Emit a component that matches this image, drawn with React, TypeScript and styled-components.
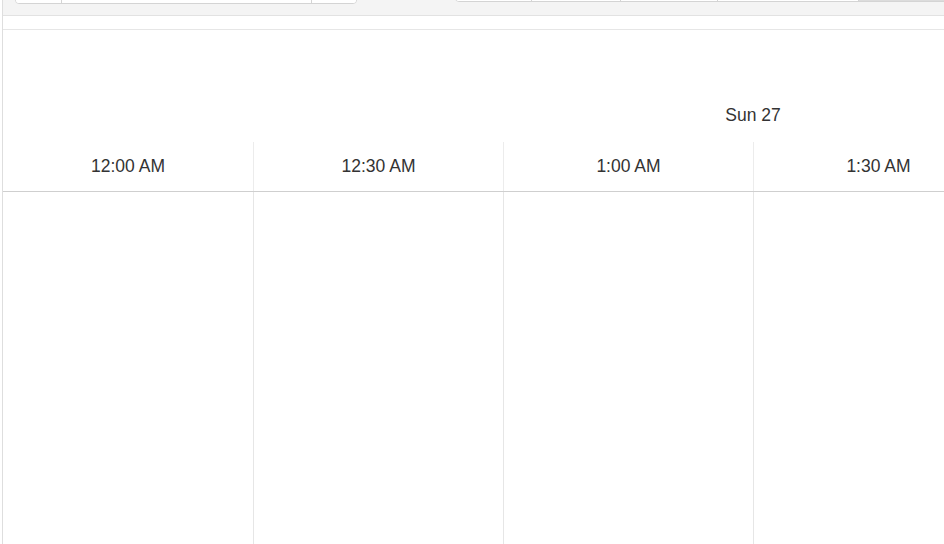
import * as React from 'react'
import styled, { createGlobalStyle } from 'styled-components'

const GlobalStyle = createGlobalStyle`
  html, body {
    margin: 0;
    padding: 0;
    background: #fff;
    overflow: hidden;
  }
  body {
    font-family: "Liberation Sans", Arial, sans-serif;
    color: #333;
  }
`

const Page = styled('div')`
  width: 944px;
  height: 544px;
  padding-left: 2px;
  box-sizing: border-box;
  overflow: hidden;
`

const Frame = styled('div')`
  height: 100%;
  border-left: 1px solid #dedede;
  display: flex;
  flex-direction: column;
  overflow: hidden;
`

const Toolbar = styled('div')`
  height: 15px;
  flex: none;
  background: #f4f4f4;
  border-bottom: 1px solid #e2e2e2;
  overflow: hidden;
  position: relative;
`

// button groups are scrolled mostly out of view; only their bottoms show
const Group = styled('div')<{ $left: number; $bottom: number }>`
  position: absolute;
  left: ${(p) => p.$left}px;
  bottom: ${(p) => p.$bottom}px;
  display: flex;
  height: 30px;
  border: 1px solid #d4d4d4;
  border-radius: 4px;
  background: #fff;
  overflow: hidden;
`

const Seg = styled('div')<{ $w: number; $active?: boolean }>`
  width: ${(p) => p.$w}px;
  height: 100%;
  background: ${(p) => (p.$active ? '#dcdcdc' : '#fff')};
  & + & {
    border-left: 1px solid #d4d4d4;
  }
`

const Band = styled('div')`
  height: 13px;
  flex: none;
  border-bottom: 1px solid #e6e6e6;
`

const Scroller = styled('div')`
  flex: 1;
  overflow: hidden;
  display: flex;
  flex-direction: column;
`

const DayRow = styled('div')`
  height: 112px;
  flex: none;
  display: flex;
  align-items: flex-end;
`

const DayCell = styled('div')`
  width: 1500px;
  flex: none;
  text-align: center;
  font-size: 17.5px;
  line-height: 20px;
  padding-bottom: 17px;
`

const TimeRow = styled('div')`
  height: 49px;
  flex: none;
  display: flex;
  border-bottom: 1px solid #cfcfcf;
`

const TimeCell = styled('div')`
  width: 250px;
  flex: none;
  box-sizing: border-box;
  display: flex;
  align-items: center;
  justify-content: center;
  font-size: 17.5px;
  & + & {
    border-left: 1px solid #ececec;
  }
`

const Body = styled('div')`
  flex: 1;
  display: flex;
`

const Slot = styled('div')`
  width: 250px;
  flex: none;
  box-sizing: border-box;
  & + & {
    border-left: 1px solid #e6e6e6;
  }
`

const times = ['12:00 AM', '12:30 AM', '1:00 AM', '1:30 AM']

export default function App() {
  return (
    <Page>
      <GlobalStyle />
      <Frame>
        <Toolbar>
          <Group $left={12} $bottom={11}>
            <Seg $w={45} />
            <Seg $w={249} />
            <Seg $w={44} />
          </Group>
          <Group $left={452} $bottom={13}>
            <Seg $w={75} />
            <Seg $w={88} />
            <Seg $w={96} />
            <Seg $w={140} />
            <Seg $w={120} $active />
          </Group>
        </Toolbar>
        <Band />
        <Scroller>
          <DayRow>
            <DayCell>Sun 27</DayCell>
          </DayRow>
          <TimeRow>
            {times.map((t) => (
              <TimeCell key={t}>{t}</TimeCell>
            ))}
          </TimeRow>
          <Body>
            {times.map((t) => (
              <Slot key={t} />
            ))}
          </Body>
        </Scroller>
      </Frame>
    </Page>
  )
}
